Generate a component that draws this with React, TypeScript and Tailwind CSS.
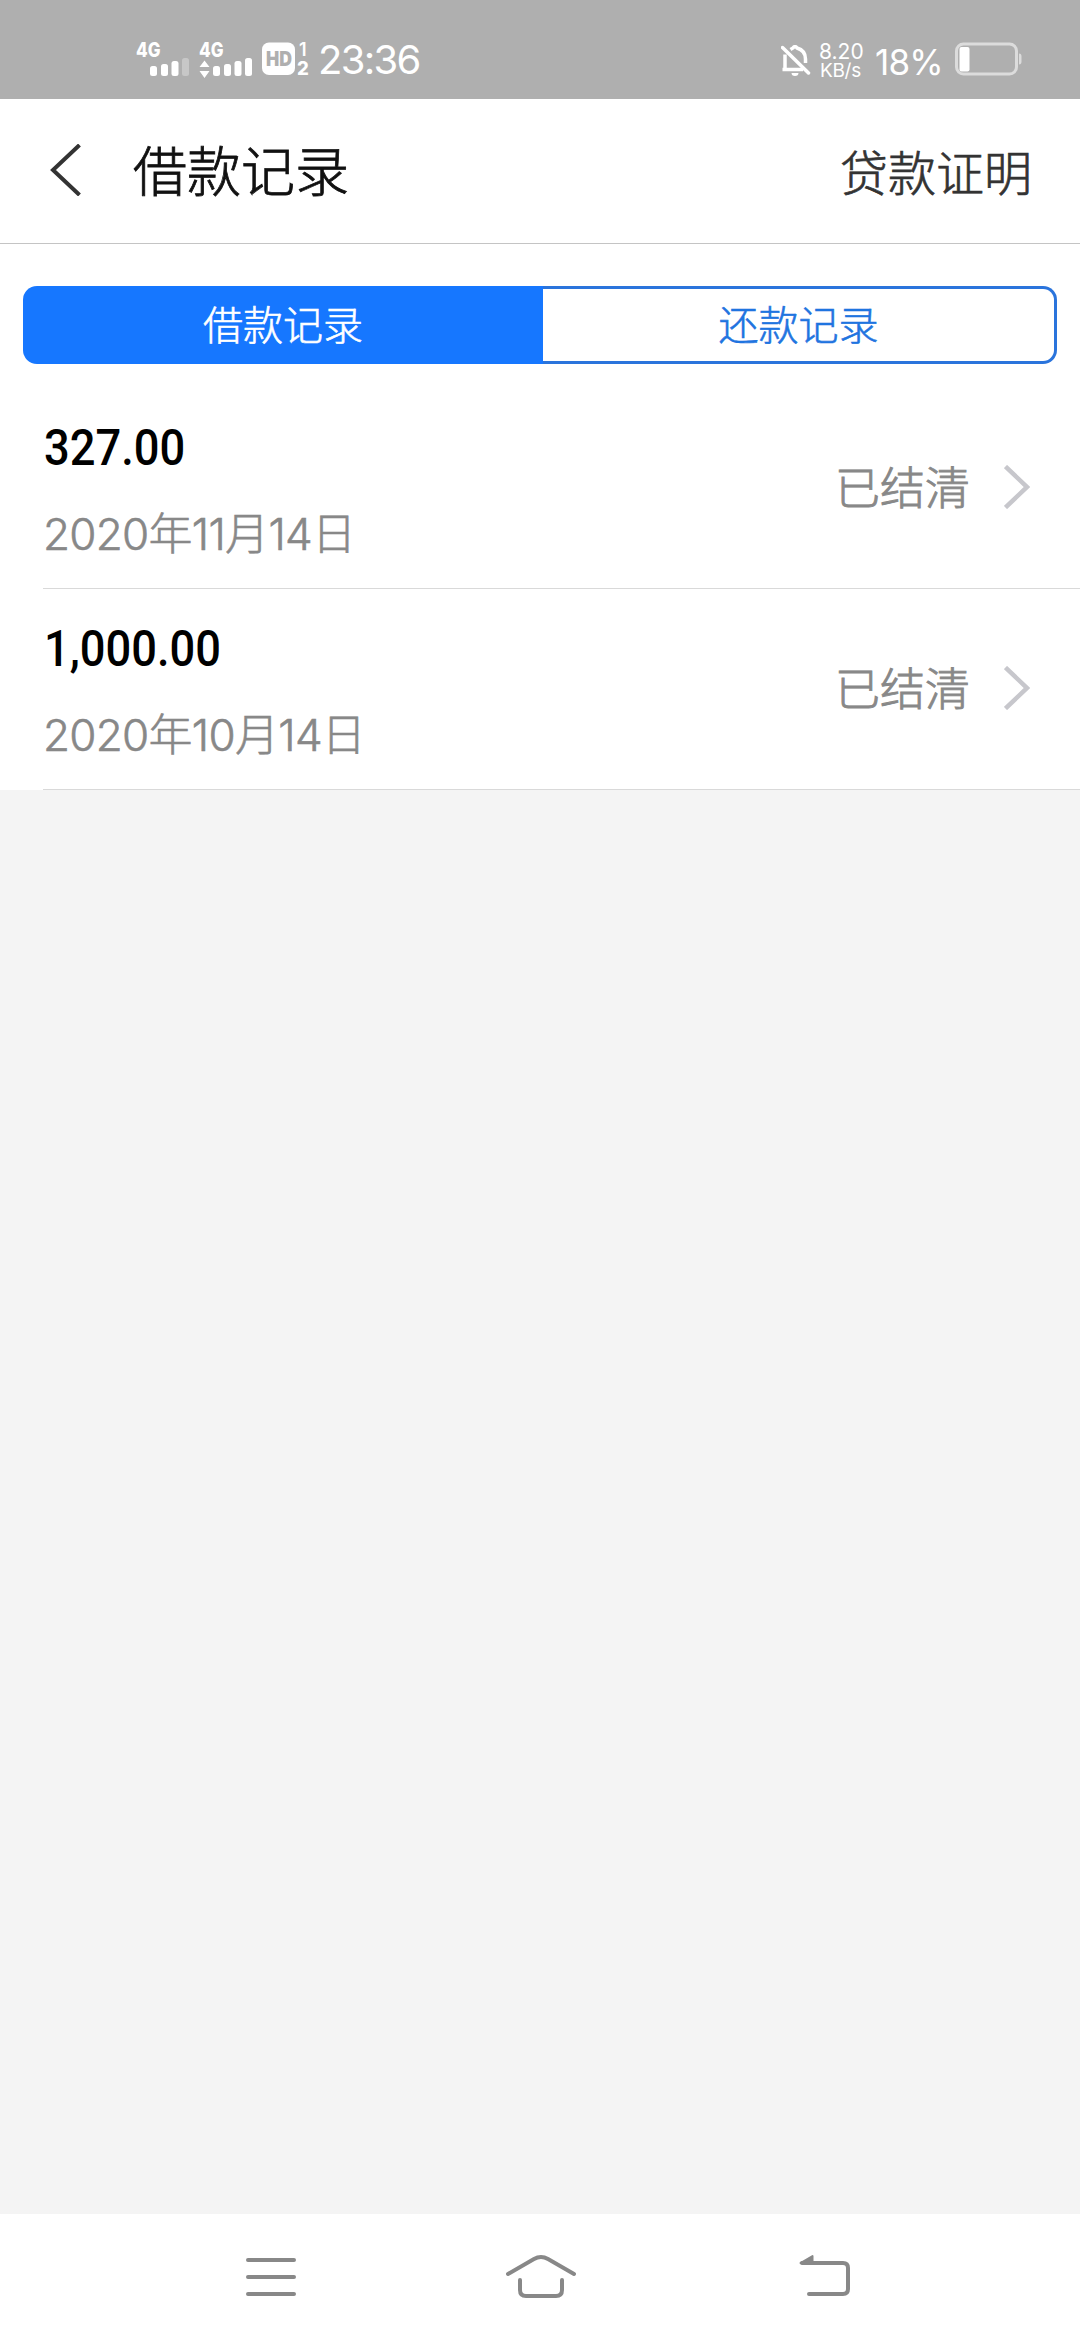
const CJK = "font-['Noto_Sans_CJK_SC',sans-serif]";
const MIX = "font-['Inter','Noto_Sans_CJK_SC',sans-serif]";

function SignalOne() {
  return (
    <svg width="54" height="44" viewBox="0 -8 54 44" className="block" fill="#fff">
      <text x="0" y="16.5" fontSize="20.5" fontWeight="800" fontFamily="Inter" textLength="24.5" lengthAdjust="spacingAndGlyphs">4G</text>
      <rect x="14" y="26" width="7" height="10" rx="2.5" />
      <rect x="25" y="24" width="7" height="12" rx="2.5" />
      <rect x="35.5" y="21" width="7" height="15" rx="2.5" />
      <rect x="46" y="18" width="7" height="18" rx="2.5" opacity=".3" />
    </svg>
  );
}

function SignalTwo() {
  return (
    <svg width="54" height="46" viewBox="0 -8 54 46" className="block" fill="#fff">
      <text x="0" y="16.5" fontSize="20.5" fontWeight="800" fontFamily="Inter" textLength="24.5" lengthAdjust="spacingAndGlyphs">4G</text>
      <path d="M5.500 20.5 10.5 27h-10zM5.500 38 0.500 31h10z" />
      <rect x="14" y="26" width="7" height="10" rx="2.5" />
      <rect x="25" y="24" width="7" height="12" rx="2.5" />
      <rect x="35.500" y="21" width="7" height="15" rx="2.5" />
      <rect x="46" y="18" width="7" height="18" rx="2.5" />
    </svg>
  );
}

function HdBadge() {
  return (
    <svg width="50" height="48" viewBox="0 -8 50 48" className="block" fill="#fff">
      <rect x="0" y="0.500" width="33" height="32.500" rx="7" />
      <text x="4" y="24" fontSize="20" fontWeight="900" fontFamily="Inter" fill="#afafaf" textLength="26" lengthAdjust="spacingAndGlyphs">HD</text>
      <text x="37" y="13.500" fontSize="18" fontWeight="600" fontFamily="Inter">1</text>
      <text x="35" y="32.500" fontSize="18.500" fontWeight="800" fontFamily="Inter">2</text>
    </svg>
  );
}

function BellOff() {
  return (
    <svg width="30" height="32" viewBox="0 0 30 32" className="block" fill="none" stroke="#fff" strokeWidth="3.500">
      <path d="M4 9.500V24.500H22M4 24.500H1.500" />
      <path d="M9.500 4.500Q11 3.500 12 3Q14 0 16 3Q24.500 5.500 24.500 14V18" />
      <path d="M1.500 2.500 27.500 28" strokeLinecap="round" />
      <path d="M10.500 28h7a3.500 3 0 0 1-7 0z" fill="#fff" stroke="none" />
    </svg>
  );
}

function Battery() {
  return (
    <svg width="67" height="34" viewBox="0 0 67 34" className="block">
      <rect x="1.500" y="2" width="60" height="30" rx="7" fill="none" stroke="#dcdcdc" strokeWidth="3" />
      <path d="M64 11.500q2.500 0 2.500 3v5q0 3-2.500 3z" fill="#dcdcdc" />
      <rect x="4.500" y="5" width="10" height="24.500" rx="2" fill="#fff" />
    </svg>
  );
}

function StatusBar() {
  return (
    <div className={`flex h-[99px] bg-[#afafaf] text-white ${MIX}`}>
      <div className="flex pl-[136px]">
        <div className="w-[63px] pt-[32px]"><SignalOne /></div>
        <div className="w-[63px] pt-[32px]"><SignalTwo /></div>
        <div className="w-[56px] pt-[34px]"><HdBadge /></div>
        <div className="pt-[36px] text-[40px] leading-[48px] tracking-[-1.7px]">23:36</div>
      </div>
      <div className="ml-auto flex pr-[58px]">
        <div className="w-[38px] pt-[45px]"><BellOff /></div>
        <div className="flex w-[56px] flex-col pt-[42px] text-[21px] leading-[19px]">
          <span>8.20</span>
          <span className="pl-[1px] text-[19px] tracking-[-0.3px]">KB/s</span>
        </div>
        <div className="w-[80px] pt-[41px] text-[35px] leading-[42px] tracking-[-0.8px]">18%</div>
        <div className="pt-[42px]"><Battery /></div>
      </div>
    </div>
  );
}

function Header() {
  return (
    <header className={`flex h-[145px] items-center border-b border-[#c4c4c4] bg-white ${CJK}`}>
      <svg width="84" height="52" viewBox="0 0 84 52" className="mb-[2px] block" fill="none" stroke="#333" strokeWidth="4">
        <path d="M79.500 1 53 26 79.500 51" />
      </svg>
      <h1 className="mb-[5px] ml-[49px] text-[54px] leading-[80px] font-light text-[#111] [-webkit-text-stroke:0.8px_#111]">借款记录</h1>
      <button className="mr-[48px] mb-[3px] ml-auto text-[48px] leading-[72px] font-light text-[#333] [-webkit-text-stroke:0.7px_#333]">贷款证明</button>
    </header>
  );
}

function Tabs() {
  return (
    <div className={`mx-[23px] mt-[42px] flex h-[78px] text-[40px] font-light ${CJK}`}>
      <button className="w-[520px] rounded-l-[14px] bg-[#1677ff] pb-[4px] leading-[74px] text-white [-webkit-text-stroke:0.6px_white]">借款记录</button>
      <button className="flex-1 rounded-r-[14px] border-y-[3px] border-r-[3px] border-[#2a74dc] pb-[4px] leading-[68px] text-[#1f74e0] [-webkit-text-stroke:0.6px_#1f74e0]">还款记录</button>
    </div>
  );
}

function RecordRow({ amount, date }: { amount: string; date: string }) {
  return (
    <li className="ml-[43px] flex h-[201px] border-b border-[#d9d9d9]">
      <div className="flex-1 pt-[30px]">
        <div className="ml-[1px] origin-left scale-x-[0.905] font-[Roboto] text-[50px] leading-[60px] font-medium text-black">{amount}</div>
        <div className={`mt-[26px] text-[44px] leading-[60px] font-light tracking-[-0.7px] text-[#888] [-webkit-text-stroke:0.6px_#888] ${MIX}`}>{date}</div>
      </div>
      <div className={`pt-[62px] text-[45px] leading-[72px] font-light text-[#888] [-webkit-text-stroke:0.9px_#888] ${CJK}`}>已结清</div>
      <svg width="26" height="44" viewBox="0 0 26 44" className="mt-[77px] mr-[50px] ml-[34px] block" fill="none" stroke="#c7c7cc" strokeWidth="4.500">
        <path d="M1.500 1.500 23 22 1.500 42.500" />
      </svg>
    </li>
  );
}

function NavBar() {
  return (
    <nav className="flex h-[126px] bg-white pt-[40px]">
      <svg width="52" height="46" viewBox="0 -14 52 46" className="ml-[245px] block overflow-visible" fill="none" stroke="#888" strokeWidth="4" strokeLinecap="round">
        <path d="M3 -8H49M3 9H49M3 26H49" transform="translate(0 0)" />
      </svg>
      <svg width="72" height="46" viewBox="0 0 72 46" className="ml-[208px] block" fill="none" stroke="#888" strokeWidth="4" strokeLinecap="round">
        <path d="M3 20 29 5Q36 1 43 5L69 20" />
        <path d="M15 26V36Q15 42 21 42H51Q57 42 57 36V26" />
      </svg>
      <svg width="54" height="46" viewBox="0 0 54 46" className="ml-[221px] block" fill="none" stroke="#888" strokeWidth="4" strokeLinecap="round">
        <path d="M4 9H45Q50 9 50 14V35Q50 40 45 40H11" />
        <path d="M2.500 9 14.500 2V9z" fill="#888" strokeWidth="2" strokeLinejoin="round" />
      </svg>
    </nav>
  );
}

export default function App() {
  return (
    <div className="flex h-[2340px] w-[1080px] flex-col overflow-hidden bg-[#f4f4f4]">
      <StatusBar />
      <Header />
      <main className="flex-1">
        <section className="bg-white">
          <div className="flow-root pb-[24px]">
            <Tabs />
          </div>
          <ul>
            <RecordRow amount="327.00" date="2020年11月14日" />
            <RecordRow amount="1,000.00" date="2020年10月14日" />
          </ul>
        </section>
      </main>
      <NavBar />
    </div>
  );
}
